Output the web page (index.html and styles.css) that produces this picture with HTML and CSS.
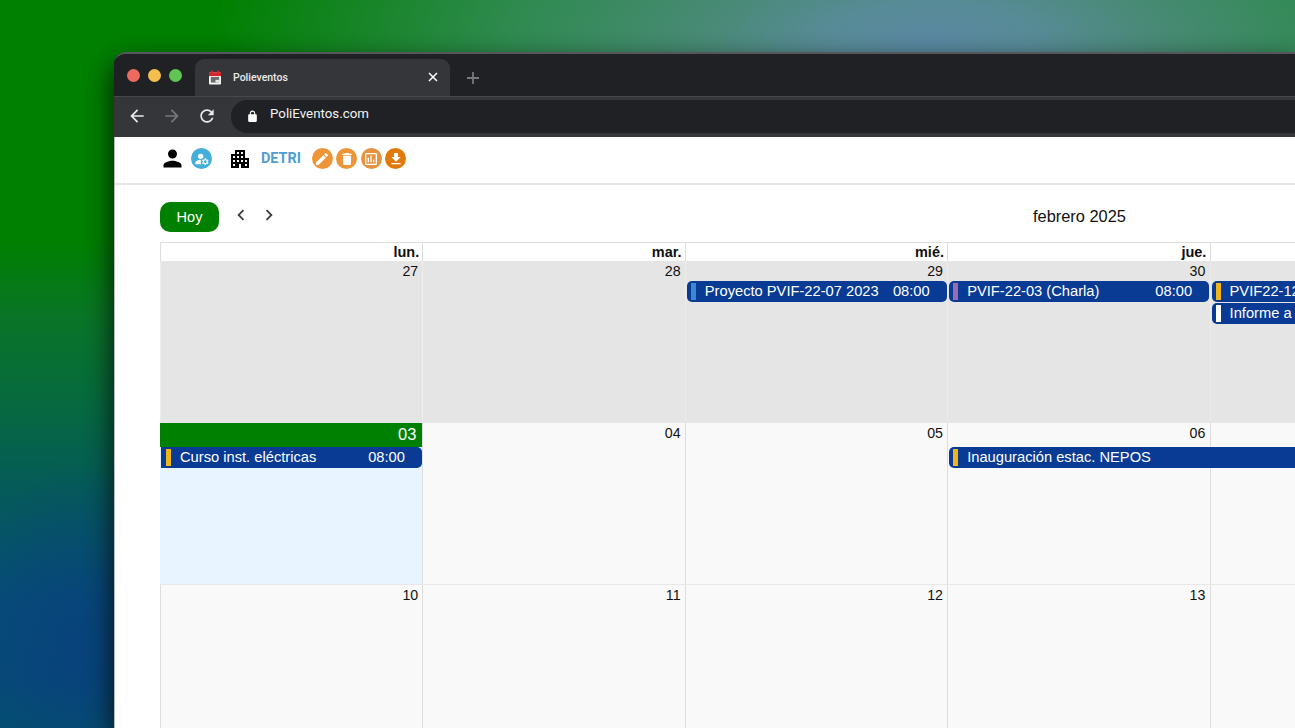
FILE: index.html
```html
<!DOCTYPE html>
<html lang="es">
<head>
<meta charset="utf-8">
<title>Polieventos</title>
<link rel="stylesheet" href="styles.css">
</head>
<body>
<div class="window">
  <div class="tabstrip">
    <div class="lights"><i class="light red"></i><i class="light yellow"></i><i class="light green"></i></div>
    <div class="tab">
      <svg class="favicon" viewBox="0 0 13 15"><rect x="0" y="2" width="13" height="13" rx="1" fill="#f4f4f4"/><rect x="0" y="2" width="13" height="4" fill="#d8232a"/><rect x="2" y="0" width="2" height="4" fill="#d8232a"/><rect x="9" y="0" width="2" height="4" fill="#d8232a"/><rect x="2" y="7" width="9" height="6" fill="#6b6b6b"/><rect x="7" y="10" width="4" height="3" fill="#e4e4e4"/></svg>
      <span class="tab-title">Polieventos</span>
      <svg class="tab-close" viewBox="0 0 10 10"><path d="M1 1l8 8M9 1l-8 8" stroke="#fff" stroke-width="1.5" fill="none"/></svg>
    </div>
    <svg class="newtab" viewBox="0 0 14 14"><path d="M7 1v12M1 7h12" stroke="#77787b" stroke-width="1.8" fill="none"/></svg>
  </div>
  <div class="toolbar">
    <svg class="nav-icon" viewBox="0 0 24 24"><path fill="#e8eaed" d="M20 11H7.83l5.59-5.59L12 4l-8 8 8 8 1.41-1.41L7.83 13H20v-2z"/></svg>
    <svg class="nav-icon" viewBox="0 0 24 24"><path fill="#77787b" d="M4 11h12.17l-5.59-5.59L12 4l8 8-8 8-1.41-1.41L16.17 13H4v-2z"/></svg>
    <svg class="nav-icon" viewBox="0 0 24 24"><path fill="#e8eaed" d="M17.65 6.35C16.2 4.9 14.21 4 12 4c-4.42 0-7.99 3.58-7.99 8s3.57 8 7.99 8c3.73 0 6.84-2.55 7.73-6h-2.08c-.82 2.33-3.04 4-5.65 4-3.31 0-6-2.69-6-6s2.69-6 6-6c1.66 0 3.14.69 4.22 1.78L13 11h7V4l-2.35 2.35z"/></svg>
    <div class="omnibox">
      <svg class="lock" viewBox="0 0 24 24"><path fill="#fff" d="M18 8h-1V6c0-2.76-2.24-5-5-5S7 3.24 7 6v2H6c-1.1 0-2 .9-2 2v10c0 1.1.9 2 2 2h12c1.1 0 2-.9 2-2V10c0-1.1-.9-2-2-2zM9 6c0-1.66 1.34-3 3-3s3 1.34 3 3v2H9V6z"/></svg>
      <span class="url">PoliEventos.com</span>
    </div>
  </div>
  <div class="page">
    <header class="appbar">
      <svg class="icon-person" viewBox="0 0 24 24"><path d="M12 12c2.21 0 4-1.79 4-4s-1.79-4-4-4-4 1.79-4 4 1.79 4 4 4zm0 2c-2.67 0-8 1.34-8 4v2h16v-2c0-2.66-5.33-4-8-4z"/></svg>
      <span class="circle blue"><svg viewBox="0 0 24 24"><circle cx="10" cy="8" r="4"/><path d="M10.67 13.02C10.45 13.01 10.23 13 10 13c-2.42 0-4.68.67-6.61 1.82C2.51 15.34 2 16.32 2 17.35V20h9.26c-.79-1.13-1.26-2.51-1.26-4 0-1.07.25-2.07.67-2.98z"/><path d="M20.75 16c0-.22-.03-.42-.06-.63l1.14-1.01-1-1.73-1.45.49c-.32-.27-.68-.48-1.08-.63L18 11h-2l-.3 1.49c-.4.15-.76.36-1.08.63l-1.45-.49-1 1.73 1.14 1.01c-.03.21-.06.41-.06.63s.03.42.06.63l-1.14 1.01 1 1.73 1.45-.49c.32.27.68.48 1.08.63L16 21h2l.3-1.49c.4-.15.76-.36 1.08-.63l1.45.49 1-1.73-1.14-1.01c.03-.21.06-.41.06-.63zM17 18c-1.1 0-2-.9-2-2s.9-2 2-2 2 .9 2 2-.9 2-2 2z"/></svg></span>
      <svg class="icon-building" viewBox="0 0 24 24"><path d="M17 11V3H7v4H3v14h8v-4h2v4h8V11h-4zM7 19H5v-2h2v2zm0-4H5v-2h2v2zm0-4H5V9h2v2zm4 4H9v-2h2v2zm0-4H9V9h2v2zm0-4H9V5h2v2zm4 8h-2v-2h2v2zm0-4h-2V9h2v2zm0-4h-2V5h2v2zm4 12h-2v-2h2v2zm0-4h-2v-2h2v2z"/></svg>
      <span class="dept">DETRI</span>
      <div class="actions">
        <span class="circle orange"><svg viewBox="0 0 24 24"><path d="M3 17.25V21h3.75L17.81 9.94l-3.75-3.75L3 17.25zM20.71 7.04c.39-.39.39-1.02 0-1.41l-2.34-2.34c-.39-.39-1.02-.39-1.41 0l-1.83 1.83 3.75 3.75 1.83-1.83z"/></svg></span>
        <span class="circle orange"><svg viewBox="0 0 24 24"><path d="M6 19c0 1.1.9 2 2 2h8c1.1 0 2-.9 2-2V7H6v12zM19 4h-3.5l-1-1h-5l-1 1H5v2h14V4z"/></svg></span>
        <span class="circle tan"><svg viewBox="0 0 24 24"><path d="M19 3H5c-1.1 0-2 .9-2 2v14c0 1.1.9 2 2 2h14c1.1 0 2-.9 2-2V5c0-1.1-.9-2-2-2zm0 16H5V5h14v14zM9 17H7v-7h2v7zm4 0h-2V7h2v10zm4 0h-2v-4h2v4z"/></svg></span>
        <span class="circle dark-orange"><svg viewBox="0 0 24 24"><path d="M19 9h-4V3H9v6H5l7 7 7-7zM5 18v2h14v-2H5z"/></svg></span>
      </div>
    </header>
    <main class="calendar">
      <div class="cal-toolbar">
        <button class="today-btn">Hoy</button>
        <svg class="chev" viewBox="0 0 24 24"><path d="M15.41 7.41L14 6l-6 6 6 6 1.41-1.41L10.83 12z"/></svg>
        <svg class="chev" viewBox="0 0 24 24"><path d="M10 6L8.59 7.41 13.17 12l-4.58 4.59L10 18l6-6z"/></svg>
        <h2 class="cal-title">febrero 2025</h2>
      </div>
      <div class="cal-head">
        <div>lun.</div><div>mar.</div><div>mié.</div><div>jue.</div><div></div>
      </div>
      <div class="week week-first">
        <div class="day past c1"><span class="num">27</span></div>
        <div class="day past c2"><span class="num">28</span></div>
        <div class="day past c3"><span class="num">29</span></div>
        <div class="day past c4"><span class="num">30</span></div>
        <div class="day past c5"></div>
        <div class="event c3 r1"><i class="bar b-blue"></i><span class="ev-name">Proyecto PVIF-22-07 2023</span><span class="ev-time">08:00</span></div>
        <div class="event c4 r1"><i class="bar b-purple"></i><span class="ev-name">PVIF-22-03 (Charla)</span><span class="ev-time">08:00</span></div>
        <div class="event c5 r1"><i class="bar b-yellow"></i><span class="ev-name">PVIF22-12</span></div>
        <div class="event c5 r2"><i class="bar b-white"></i><span class="ev-name">Informe a</span></div>
      </div>
      <div class="week week-today">
        <div class="day today c1"><span class="num">03</span></div>
        <div class="day c2"><span class="num">04</span></div>
        <div class="day c3"><span class="num">05</span></div>
        <div class="day c4"><span class="num">06</span></div>
        <div class="day c5"></div>
        <div class="event c1 r1"><i class="bar b-yellow"></i><span class="ev-name">Curso inst. eléctricas</span><span class="ev-time">08:00</span></div>
        <div class="event span45 r1"><i class="bar b-yellow"></i><span class="ev-name">Inauguración estac. NEPOS</span></div>
      </div>
      <div class="week">
        <div class="day c1"><span class="num">10</span></div>
        <div class="day c2"><span class="num">11</span></div>
        <div class="day c3"><span class="num">12</span></div>
        <div class="day c4"><span class="num">13</span></div>
        <div class="day c5"></div>
      </div>
    </main>
  </div>
</div>
</body>
</html>
```
FILE: styles.css
```css
* { box-sizing: border-box; }
html, body { margin: 0; height: 100%; }
body {
  width: 1295px;
  height: 728px;
  overflow: hidden;
  font-family: "Liberation Sans", Arial, sans-serif;
  padding: 52px 0 0 114px;
  background:
    radial-gradient(ellipse 720px 260px at 930px 40px, #5a88a2 0%, #578b96 15%, #4a8a78 30%, #2f8a50 58%, rgba(0,128,0,0) 100%),
    radial-gradient(ellipse 100px 190px at 75px 650px, rgba(10,60,125,.55), rgba(10,60,125,0)),
    linear-gradient(to bottom, #008000 0, #008000 240px, #0a7428 320px, #066a3e 400px, #05595c 500px, #064c78 600px, #064a78 680px, #045070 728px);
}
.window {
  width: 1181px;
  height: 676px;
  background: #202124;
  border-top: 2px solid #56575a;
  border-radius: 12px 0 0 0;
  overflow: hidden;
  box-shadow: 0 12px 28px rgba(0,0,0,.85);
}
.tabstrip {
  height: 43px;
  background: #202124;
  display: flex;
  align-items: flex-end;
  border-bottom: 1px solid #47484c;
}
.lights { display: flex; gap: 8px; padding: 0 0 14.5px 13px; width: 81px; }
.light { width: 13px; height: 13px; border-radius: 50%; display: block; flex: none; }
.red { background: #ec6a5e; }
.yellow { background: #f4bf4f; }
.green { background: #61c554; }
.tab {
  width: 255px;
  height: 37px;
  background: #35363a;
  border-radius: 9px 9px 0 0;
  display: flex;
  align-items: center;
  padding: 0 12px 1px 14px;
}
.favicon { width: 12px; height: 15px; flex: none; }
.tab-title { margin-left: 12px; color: #e8eaed; font: 500 10.5px Roboto, sans-serif; flex: 1; }
.tab-close { width: 10px; height: 10px; flex: none; }
.newtab { width: 14px; height: 14px; margin: 0 0 11px 16px; }
.toolbar {
  height: 40px;
  background: #35363a;
  display: flex;
  align-items: center;
  padding: 0 0 2px 13px;
  gap: 15px;
}
.toolbar .nav-icon { width: 20px; height: 20px; flex: none; }
.omnibox {
  flex: 1;
  margin-left: -1px;
  height: 33px;
  background: #202124;
  border-radius: 16px 0 0 16px;
  display: flex;
  align-items: center;
  padding-left: 15px;
}
.lock { width: 13px; height: 13px; }
.url { margin-left: 11px; color: #f1f3f4; font: 13.3px Roboto, sans-serif; position: relative; top: -3px; }
.page { background: #fff; border-left: 1px solid #b8bbbb; }
.appbar {
  height: 48px;
  display: flex;
  align-items: center;
  padding: 0 0 3px 44px;
  border-bottom: 2px solid #e6e6e6;
  background: #fff;
}
.icon-person { width: 27px; height: 27px; fill: #000; flex: none; }
.circle {
  width: 21px;
  height: 21px;
  border-radius: 50%;
  display: flex;
  align-items: center;
  justify-content: center;
  flex: none;
}
.circle svg { width: 16px; height: 16px; fill: #fff; }
.blue { background: #45aedb; margin-left: 5px; }
.icon-building { width: 24px; height: 24px; fill: #000; flex: none; margin-left: 16px; }
.dept { margin-left: 9px; color: #4f9ed2; font: bold 14.4px Roboto, sans-serif; }
.actions { display: flex; gap: 3.5px; margin-left: 11px; }
.orange { background: #ee9637; }
.tan { background: #e59340; }
.dark-orange { background: #e27a0b; }
.calendar { padding: 17px 0 0 45px; }
.cal-toolbar { display: flex; align-items: center; height: 30px; margin-bottom: 10px; }
.today-btn {
  width: 59px;
  height: 30px;
  border: 0;
  border-radius: 10px;
  background: #008000;
  color: #fff;
  font: 14.5px "Liberation Sans", Arial, sans-serif;
  padding: 0;
}
.chev { width: 22px; height: 22px; fill: #3d3d3d; flex: none; margin-top: -4px; }
.chev:first-of-type { margin-left: 11px; }
.chev + .chev { margin-left: 6px; }
.cal-title { margin: 0 0 0 753px; font-size: 16.4px; font-weight: 400; color: #111; white-space: nowrap; position: relative; top: -1px; }
.cal-head, .week {
  display: grid;
  grid-template-columns: repeat(5, 262.4px);
  width: 1312px;
}
.cal-head {
  height: 19px;
  border-top: 1px solid #ddd;
  background: #fff;
  font-weight: 700;
  font-size: 14.5px;
  line-height: 18px;
  color: #111;
  text-align: right;
}
.cal-head div { padding-right: 3.2px; border-left: 1px solid #ddd; }
.week {
  height: 162px;
  grid-template-rows: 20px 22px 22px 1fr;
  border-bottom: 1px solid #e8e8e8;
}
.week-today { grid-template-rows: 24px 22px 22px 1fr; }
.day {
  grid-row: 1 / -1;
  background: #f9f9f9;
  border-left: 1px solid #ddd;
  text-align: right;
  padding: 2px 4.2px 0 0;
  font-size: 14.2px;
  line-height: 16px;
  color: #111;
}
.c1 { grid-column: 1; }
.c2 { grid-column: 2; }
.c3 { grid-column: 3; }
.c4 { grid-column: 4; }
.c5 { grid-column: 5; }
.span45 { grid-column: 4 / 6; }
.past { background: #e5e5e5; border-left-color: #ececec; }
.today { background: #e8f4ff; padding: 0; border-left: 0; }
.today .num {
  display: block;
  background: #008000;
  color: #fff;
  font-size: 16.5px;
  line-height: 23px;
  height: 24px;
  padding-right: 6px;
}
.event {
  display: flex;
  align-items: center;
  height: 21px;
  margin: 0 .5px 0 2px;
  background: #0a3b94;
  border-radius: 5px;
  color: #fff;
  font-size: 14.7px;
  padding: 0 0 1px 4px;
  white-space: nowrap;
  overflow: hidden;
}
.event.c1 { margin-left: 1px; padding-left: 5px; border-radius: 0 5px 5px 0; }
.r1 { grid-row: 2; }
.r2 { grid-row: 3; }
.bar { width: 5px; height: 17px; flex: none; margin-right: 9px; display: block; }
.b-blue { background: #3f86d0; }
.b-purple { background: #9b6cb0; }
.b-yellow { background: #f2b517; }
.b-white { background: #fff; }
.ev-name { flex: 1; }
.ev-time { margin-right: 17px; }
```
